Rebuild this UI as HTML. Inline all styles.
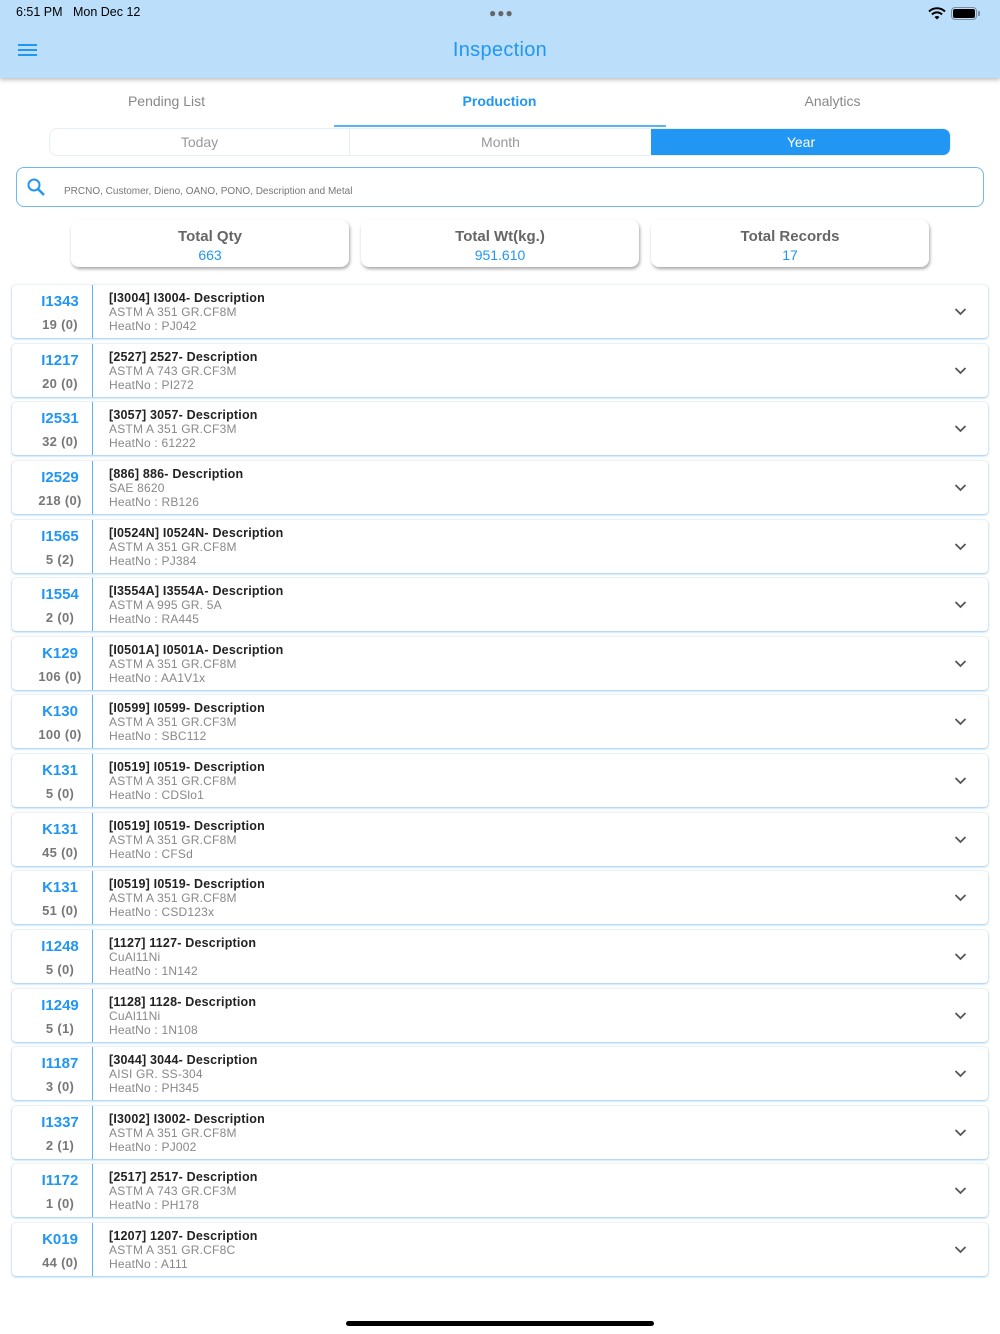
<!DOCTYPE html>
<html><head><meta charset="utf-8">
<style>
*{margin:0;padding:0;box-sizing:border-box}
body{width:1000px;height:1334px;position:relative;background:#fff;font-family:"Liberation Sans",sans-serif;overflow:hidden}
.hdr{position:absolute;left:0;top:0;width:1000px;height:78px;background:#bbdefa;box-shadow:0 2px 4px rgba(0,0,0,.25)}
.abs{position:absolute}
.tab{position:absolute;top:93px;font-size:14px;color:#888;width:333px;text-align:center}
.seg{position:absolute;top:128px;left:49px;width:902px;height:28px;border:1px solid #e6eef6;border-radius:8px;overflow:hidden}
.seg div{position:absolute;top:0;height:26px;line-height:26px;text-align:center;font-size:14px;color:#999}
.search{position:absolute;left:16px;top:167px;width:968px;height:40px;border:1px solid #6fb8f2;border-radius:8px}
.card{position:absolute;top:220px;width:278px;height:47px;border-radius:8px;background:#fff;box-shadow:1px 2px 3px rgba(0,0,0,.35);text-align:center}
.card .t{font-size:15px;font-weight:bold;color:#666;margin-top:8px}
.card .v{font-size:14px;color:#2196f3;margin-top:2px}
.row{position:absolute;left:12px;width:976px;height:53px;background:#fff;border-radius:4px;box-shadow:0 1px 2px rgba(33,150,243,.45),0 0 2px rgba(0,0,0,.12)}
.row .code{position:absolute;left:0;width:80px;top:8px;text-align:center;font-size:15px;font-weight:bold;color:#2196f3}
.row .cnt{position:absolute;left:0;width:96px;top:32px;text-align:center;font-size:13px;color:#777;font-weight:bold;letter-spacing:.3px}
.row .dv{position:absolute;left:80px;top:0;width:1px;height:53px;background:#5bb3f2}
.row .l1{position:absolute;left:97px;top:6px;font-size:12.5px;font-weight:bold;color:#222;letter-spacing:.2px}
.row .l2{position:absolute;left:97px;top:20px;font-size:12px;color:#888;letter-spacing:.2px}
.row .l3{position:absolute;left:97px;top:34px;font-size:12px;color:#888;letter-spacing:.2px}
.row svg{position:absolute;left:942px;top:22px}
</style></head><body>
<div class="hdr">
 <div class="abs" style="left:16px;top:5px;font-size:12.5px;color:#000">6:51 PM&nbsp;&nbsp;&nbsp;Mon Dec 12</div>
 <div class="abs" style="left:489px;top:6px;font-size:12px;color:#666;letter-spacing:1px">&#9679;&#9679;&#9679;</div>
 <svg class="abs" style="left:928px;top:7px" width="18" height="13" viewBox="0 0 18 13"><path d="M1 4.5a11.5 11.5 0 0 1 16 0" stroke="#000" stroke-width="2" fill="none"/><path d="M4 7.5a7 7 0 0 1 10 0" stroke="#000" stroke-width="2" fill="none"/><path d="M9 12.5l-2.5-2.5a3.5 3.5 0 0 1 5 0z" fill="#000"/></svg>
 <div class="abs" style="left:951px;top:7px;width:26px;height:13px;border:1px solid #7a8ea0;border-radius:4px;padding:1px"><div style="width:100%;height:100%;background:#000;border-radius:2px"></div></div>
 <div class="abs" style="left:978px;top:11px;width:2px;height:5px;background:#7a8ea0;border-radius:0 1px 1px 0"></div>
 <svg class="abs" style="left:18px;top:43px" width="19" height="15"><rect y="1" width="19" height="2" fill="#2196f3"/><rect y="6" width="19" height="2" fill="#2196f3"/><rect y="11" width="19" height="2" fill="#2196f3"/></svg>
 <div class="abs" style="left:0;width:1000px;top:39px;text-align:center;font-size:20px;color:#2196f3;letter-spacing:.3px">Inspection</div>
</div>
<div class="tab" style="left:0">Pending List</div>
<div class="tab" style="left:333px;color:#2196f3;font-weight:bold">Production</div>
<div class="tab" style="left:666px">Analytics</div>
<div class="abs" style="left:334px;top:125px;width:332px;height:2px;background:#5bb3f2"></div>
<div class="seg">
 <div style="left:0;width:300px;border-right:1px solid #e6eef6">Today</div>
 <div style="left:300px;width:301px">Month</div>
 <div style="left:601px;width:300px;background:#2196f3;color:#fff">Year</div>
</div>
<div class="search">
 <svg class="abs" style="left:10px;top:10px" width="18" height="18" viewBox="0 0 18 18"><circle cx="7" cy="7" r="5.5" stroke="#2196f3" stroke-width="2" fill="none"/><path d="M11 11l6 6" stroke="#2196f3" stroke-width="2.4"/></svg>
 <div class="abs" style="left:47px;top:18px;font-size:10px;color:#777">PRCNO, Customer, Dieno, OANO, PONO, Description and Metal</div>
</div>
<div class="card" style="left:71px"><div class="t">Total Qty</div><div class="v">663</div></div>
<div class="card" style="left:361px"><div class="t">Total Wt(kg.)</div><div class="v">951.610</div></div>
<div class="card" style="left:651px"><div class="t">Total Records</div><div class="v">17</div></div>
<div id="list"></div>
<div class="abs" style="left:346px;top:1321px;width:308px;height:5px;background:#000;border-radius:3px"></div>
<script>
var d=[["I1343","19 (0)","[I3004] I3004- Description","ASTM A 351 GR.CF8M","PJ042"],
["I1217","20 (0)","[2527] 2527- Description","ASTM A 743 GR.CF3M","PI272"],
["I2531","32 (0)","[3057] 3057- Description","ASTM A 351 GR.CF3M","61222"],
["I2529","218 (0)","[886] 886- Description","SAE 8620","RB126"],
["I1565","5 (2)","[I0524N] I0524N- Description","ASTM A 351 GR.CF8M","PJ384"],
["I1554","2 (0)","[I3554A] I3554A- Description","ASTM A 995 GR. 5A","RA445"],
["K129","106 (0)","[I0501A] I0501A- Description","ASTM A 351 GR.CF8M","AA1V1x"],
["K130","100 (0)","[I0599] I0599- Description","ASTM A 351 GR.CF3M","SBC112"],
["K131","5 (0)","[I0519] I0519- Description","ASTM A 351 GR.CF8M","CDSlo1"],
["K131","45 (0)","[I0519] I0519- Description","ASTM A 351 GR.CF8M","CFSd"],
["K131","51 (0)","[I0519] I0519- Description","ASTM A 351 GR.CF8M","CSD123x"],
["I1248","5 (0)","[1127] 1127- Description","CuAl11Ni","1N142"],
["I1249","5 (1)","[1128] 1128- Description","CuAl11Ni","1N108"],
["I1187","3 (0)","[3044] 3044- Description","AISI GR. SS-304","PH345"],
["I1337","2 (1)","[I3002] I3002- Description","ASTM A 351 GR.CF8M","PJ002"],
["I1172","1 (0)","[2517] 2517- Description","ASTM A 743 GR.CF3M","PH178"],
["K019","44 (0)","[1207] 1207- Description","ASTM A 351 GR.CF8C","A111"]];
var h="";
d.forEach(function(r,i){var t=285+i*58.625;
h+='<div class="row" style="top:'+t+'px"><div class="code">'+r[0]+'</div><div class="cnt" style="width:96px;left:0">'+r[1]+'</div><div class="dv"></div><div class="l1">'+r[2]+'</div><div class="l2">'+r[3]+'</div><div class="l3">HeatNo : '+r[4]+'</div><svg width="13" height="9" viewBox="0 0 13 9"><path d="M1.5 2l5 5 5-5" stroke="#555" stroke-width="1.8" fill="none"/></svg></div>';});
document.getElementById("list").innerHTML=h;
</script>
<style>.row .cnt{left:0;width:96px}.row .code{width:96px}</style>
</body></html>
